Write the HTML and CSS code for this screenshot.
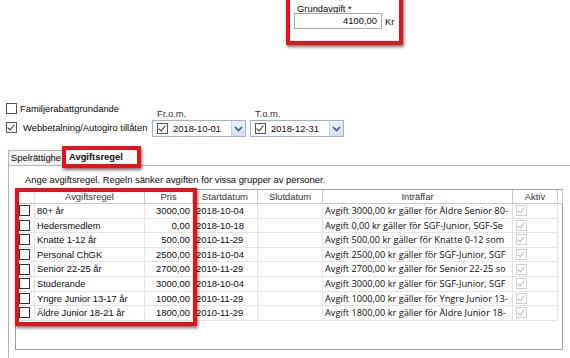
FILE: index.html
```html
<!DOCTYPE html>
<html lang="sv">
<head>
    <meta charset="UTF-8">
    <title>Avgiftsregel</title>
    <link rel="stylesheet" href="styles.css">
</head>
<body>

    <div class="fee-box">
        <label class="fee-label">Grundavgift *</label>
        <div class="fee-row">
            <div class="fee-input">4100,00</div>
            <span class="fee-unit">Kr</span>
        </div>
    </div>

    <div class="options">
        <div class="checks">
            <div class="check-row"><span class="cb"></span>Familjerabattgrundande</div>
            <div class="check-row"><span class="cb checked"></span>Webbetalning/Autogiro tillåten</div>
        </div>
        <div class="date-group">
            <div class="date-label">Fr.o.m.</div>
            <div class="date-picker">
                <span class="cb checked"></span>
                <span class="date-text">2018-10-01</span>
                <span class="drop"><svg width="9" height="6" viewBox="0 0 9 6"><path d="M1 1 L4.5 4.5 L8 1" fill="none" stroke="#3d5c8a" stroke-width="1.6"/></svg></span>
            </div>
        </div>
        <div class="date-group">
            <div class="date-label">T.o.m.</div>
            <div class="date-picker">
                <span class="cb checked"></span>
                <span class="date-text">2018-12-31</span>
                <span class="drop"><svg width="9" height="6" viewBox="0 0 9 6"><path d="M1 1 L4.5 4.5 L8 1" fill="none" stroke="#3d5c8a" stroke-width="1.6"/></svg></span>
            </div>
        </div>
    </div>

    <div class="tabs">
        <div class="tab">Spelrättighe</div>
        <div class="tab active">Avgiftsregel</div>
    </div>

    <div class="panel">
        <p class="hint">Ange avgiftsregel. Regeln sänker avgiften för vissa grupper av personer.</p>

        <div class="grid">
            <div class="grid-row head">
                <div class="c c-sel"></div>
                <div class="c">Avgiftsregel</div>
                <div class="c">Pris</div>
                <div class="c">Startdatum</div>
                <div class="c">Slutdatum</div>
                <div class="c">Inträffar</div>
                <div class="c">Aktiv</div>
                <div class="c c-end"></div>
            </div>
            <div id="rows"></div>
            <div class="highlight"></div>
        </div>
    </div>

    <script>
        const rules = [
            ['80+ år', '3000,00', '2018-10-04', 'Avgift 3000,00 kr gäller för Äldre Senior 80-'],
            ['Hedersmedlem', '0,00', '2018-10-18', 'Avgift 0,00 kr gäller för SGF-Junior, SGF-Se'],
            ['Knatte 1-12 år', '500,00', '2010-11-29', 'Avgift 500,00 kr gäller för Knatte 0-12 som'],
            ['Personal ChGK', '2500,00', '2018-10-04', 'Avgift 2500,00 kr gäller för SGF-Junior, SGF'],
            ['Senior 22-25 år', '2700,00', '2010-11-29', 'Avgift 2700,00 kr gäller för Senior 22-25 so'],
            ['Studerande', '3000,00', '2018-10-04', 'Avgift 3000,00 kr gäller för SGF-Junior, SGF'],
            ['Yngre Junior 13-17 år', '1000,00', '2010-11-29', 'Avgift 1000,00 kr gäller för Yngre Junior 13-'],
            ['Äldre Junior 18-21 år', '1800,00', '2010-11-29', 'Avgift 1800,00 kr gäller för Äldre Junior 18-']
        ];

        const rowsContainer = document.getElementById('rows');
        rules.forEach(r => {
            const row = document.createElement('div');
            row.className = 'grid-row';
            row.innerHTML =
                '<div class="c c-sel"><span class="cb row-cb"></span></div>' +
                '<div class="c name">' + r[0] + '</div>' +
                '<div class="c price">' + r[1] + '</div>' +
                '<div class="c date">' + r[2] + '</div>' +
                '<div class="c"></div>' +
                '<div class="c text">' + r[3] + '</div>' +
                '<div class="c aktiv"><span class="cb dim checked"></span></div>';
            rowsContainer.appendChild(row);
        });
    </script>

</body>
</html>
```

FILE: styles.css
```css
body {
    margin: 0;
    background: #fff;
    color: #0a0a0a;
    font-family: "Liberation Sans", Arial, sans-serif;
    font-size: 9.4px;
    width: 570px;
    height: 358px;
    overflow: hidden;
}

/* red callout boxes */
.fee-box, .tab.active, .highlight {
    border: 4px solid #e2141b;
    box-shadow: 1px 2px 3px rgba(0, 0, 0, 0.55);
}

.fee-box {
    margin: -4px 0 0 286px;
    width: 105px;
    height: 37px;
    padding: 4px 0 0 4px;
}
.fee-label {
    display: block;
    padding-left: 3px;
    height: 10px;
    line-height: 10px;
}
.fee-row {
    display: flex;
    align-items: center;
    gap: 3px;
    margin-top: -1px;
}
.fee-input {
    width: 88px;
    height: 16px;
    border: 1px solid #a9a9a9;
    box-sizing: border-box;
    text-align: right;
    padding-right: 4px;
    line-height: 14px;
}

.options {
    display: flex;
    margin: 58px 0 0 6px;
}
.checks {
    width: 146px;
    display: flex;
    flex-direction: column;
    gap: 8px;
}
.check-row {
    display: flex;
    align-items: center;
    gap: 3px;
    height: 11px;
    white-space: nowrap;
}
.check-row .cb.checked { margin-right: 3px; }

.cb {
    display: inline-block;
    width: 11px;
    height: 11px;
    border: 1px solid #555;
    box-sizing: border-box;
    background: #fff;
    position: relative;
    flex: none;
}
.cb.checked::after {
    content: "";
    position: absolute;
    left: 2px;
    top: 0;
    width: 3px;
    height: 6px;
    border: solid #333;
    border-width: 0 1px 1px 0;
    transform: rotate(40deg);
}
.cb.dim {
    border-color: #cfcfcf;
}
.cb.dim.checked::after {
    border-color: #b8b8b8;
}

.date-group {
    width: 98px;
    margin-top: 5px;
}
.date-label {
    padding-left: 5px;
    height: 12px;
    line-height: 12px;
    color: #333;
}
.date-picker {
    display: flex;
    align-items: center;
    width: 94px;
    height: 17px;
    border: 1px solid #9fb2d0;
    box-sizing: border-box;
    padding-left: 4px;
    gap: 5px;
}
.date-text {
    flex: 1;
}
.drop {
    width: 13px;
    height: 15px;
    display: flex;
    align-items: center;
    justify-content: center;
    background: linear-gradient(#eaf1fb, #d2e0f4);
    border-left: 1px solid #c3d3ea;
}

.tabs {
    display: flex;
    margin: 13px 0 0 8px;
    height: 15px;
    align-items: flex-end;
}
.tab {
    height: 15px;
    line-height: 14px;
    padding: 0 2px;
    border: 1px solid #b5b5b5;
    border-bottom: none;
    box-sizing: border-box;
    background: #f4f4f4;
    width: 57px;
    overflow: hidden;
    white-space: nowrap;
}
.tab.active {
    position: relative;
    z-index: 2;
    width: 79px;
    height: 22px;
    margin-bottom: -3px;
    padding: 0 0 0 3px;
    line-height: 13px;
    font-weight: bold;
    background: #fff;
    margin-left: -3px;
}
.tab.active::after {
    content: "";
    position: absolute;
    right: 1px;
    top: -1px;
    width: 1px;
    height: 15px;
    background: #b5b5b5;
    transform: skewX(35deg);
    transform-origin: top;
}

.panel {
    margin-left: 8px;
    border-top: 1px solid #b5b5b5;
    border-left: 1px solid #b5b5b5;
    height: 200px;
    padding: 0 0 0 6px;
}
.hint {
    margin: 0 0 0 10px;
    padding-top: 8px;
    height: 12px;
    line-height: 12px;
}

.grid {
    position: relative;
    margin-top: 3px;
    width: 548px;
    height: 161px;
    border: 1px solid #a0a0a0;
    box-sizing: border-box;
    background: #fff;
}
.grid-row {
    display: grid;
    grid-template-columns: 19px 110px 48px 65px 65px 190px 45px 4px;
    height: 14.6px;
}
.grid-row.head {
    height: 14px;
}
.c {
    border-right: 1px solid #e4e4e4;
    border-bottom: 1px solid #e4e4e4;
    padding: 0 2px;
    line-height: 13.6px;
    white-space: nowrap;
    overflow: hidden;
}
.head .c {
    text-align: center;
    line-height: 13px;
    border-right-color: #c8c8c8;
    border-bottom-color: #c8c8c8;
    color: #333;
}
.head .c-sel { border-right-color: #e4e4e4; }
.c-sel {
    display: flex;
    align-items: center;
    padding: 0 0 0 3px;
}
.row-cb {
    border-color: #333;
}
.price { text-align: right; }
.date { padding-left: 3px; }
.text {
    font-family: "Open Sans", sans-serif;
    font-size: 9.2px;
}
.aktiv {
    display: flex;
    align-items: center;
    padding-left: 3px;
}

.highlight {
    position: absolute;
    left: -1px;
    top: -2px;
    width: 174px;
    height: 130px;
    pointer-events: none;
}
```
